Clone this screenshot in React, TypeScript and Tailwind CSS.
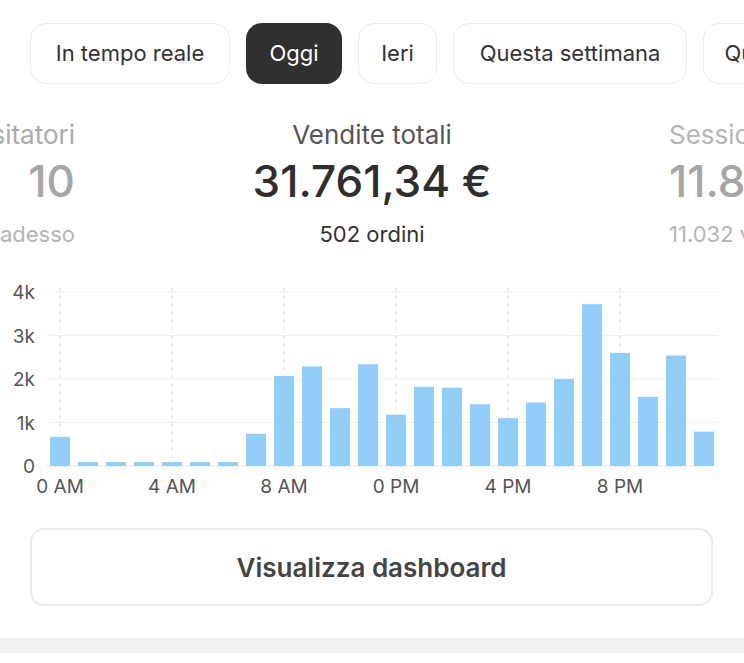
import React from 'react'

const ranges = [
    { label: 'In tempo reale', width: 'w-[200px]' },
    { label: 'Oggi', width: 'w-[96px]', active: true },
    { label: 'Ieri', width: 'w-[79px]' },
    { label: 'Questa settimana', width: 'w-[234px]' },
    { label: 'Questo mese', width: 'w-[180px]' },
];

// hourly sales in thousands of euro
const hourly = [
    0.67, 0.09, 0.09, 0.09, 0.09, 0.09, 0.09, 0.74, 2.07, 2.29, 1.33, 2.34,
    1.18, 1.82, 1.8, 1.42, 1.1, 1.46, 2.0, 3.72, 2.6, 1.59, 2.54, 0.79,
];

const hourTicks = ['0 AM', '4 AM', '8 AM', '0 PM', '4 PM', '8 PM'];

const SalesChart = () => {
    const base = 467;
    const perK = 43.5;
    return (
        <svg width="744" height="230" viewBox="0 280 744 230" className="block">
            {[0, 1, 2, 3, 4].map((k) => (
                <g key={k}>
                    <line x1="46" x2="718" y1={base - k * perK} y2={base - k * perK} stroke={k === 0 ? '#e6e6e6' : '#efefef'} strokeWidth="1" />
                    <text x="35" y={base - k * perK + 7} textAnchor="end" fontSize="19" fill="#555" fontFamily="Inter, sans-serif">
                        {k === 0 ? '0' : `${k}k`}
                    </text>
                </g>
            ))}
            {hourTicks.map((t, i) => (
                <g key={t}>
                    <line x1={60 + i * 112} x2={60 + i * 112} y1="288" y2={base} stroke="#e4e4e4" strokeDasharray="4 4" />
                    <text x={60 + i * 112} y="494" textAnchor="middle" fontSize="19" fill="#555" fontFamily="Inter, sans-serif">
                        {t}
                    </text>
                </g>
            ))}
            {hourly.map((v, i) => (
                <rect key={i} x={50 + i * 28} y={base - v * perK} width="20" height={v * perK} fill="#90cdf9" />
            ))}
        </svg>
    );
};

export default function App() {
    return (
        <div className="w-[744px] h-[663px] overflow-hidden bg-white font-['Inter',sans-serif]">
            <div className="flex gap-4 pl-[30px] pt-[23px] whitespace-nowrap">
                {ranges.map((r, i) => (
                    <div
                        key={i}
                        className={`${r.width} shrink-0 h-[61px] flex items-center justify-center rounded-2xl text-[22px] ${r.active ? 'bg-[#303030] text-white' : 'border border-[#ececec] text-[#333]'}`}
                    >
                        {r.label}
                    </div>
                ))}
            </div>

            <div className="grid grid-cols-[75px_594px_75px] mt-[33px] whitespace-nowrap">
                <div className="flex flex-col items-end text-[#ababab]">
                    <div className="text-[26px] leading-[36px]">Visitatori</div>
                    <div className="text-[44px] font-medium leading-[56px] text-[#a6a6a6]">10</div>
                    <div className="text-[22px] leading-[30px] mt-[10px] text-[#b5b5b5]">ora adesso</div>
                </div>
                <div className="flex flex-col items-center">
                    <div className="text-[26px] leading-[36px] text-[#555]">Vendite totali</div>
                    <div className="text-[44px] font-medium leading-[56px] text-[#2e2e2e]">31.761,34 €</div>
                    <div className="text-[22px] leading-[30px] mt-[10px] text-[#333]">502 ordini</div>
                </div>
                <div className="flex flex-col items-start text-[#ababab]">
                    <div className="text-[26px] leading-[36px] text-[#b5b5b5]">Sessioni</div>
                    <div className="text-[44px] font-medium leading-[56px] text-[#a6a6a6]">11.845</div>
                    <div className="text-[22px] leading-[30px] mt-[10px] text-[#b5b5b5]">11.032 visitatori</div>
                </div>
            </div>

            <div className="mt-[30px]">
                <SalesChart />
            </div>

            <div className="px-[30px] mt-[19px]">
                <button className="w-[683px] h-[78px] rounded-[14px] border-2 border-[#ebebeb] text-[26px] font-semibold text-[#444]">
                    Visualizza dashboard
                </button>
            </div>

            <div className="mt-[32px] h-[15px] bg-[#f1f1f1]" />
        </div>
    );
}
